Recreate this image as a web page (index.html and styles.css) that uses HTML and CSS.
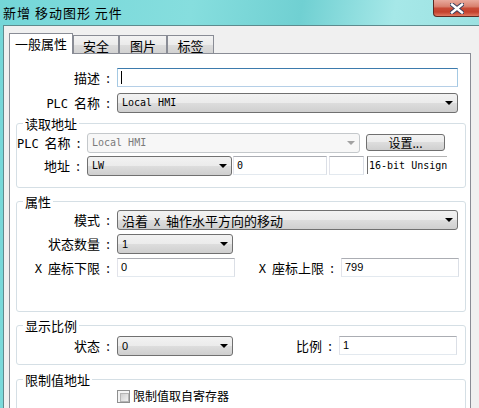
FILE: index.html
```html
<!DOCTYPE html>
<html lang="zh-CN">

<head>
  <meta charset="UTF-8">
  <title>新增 移动图形 元件</title>
  <link rel="stylesheet" href="styles.css">
</head>

<body>
  <div class="titlebar">
    <span class="title">新增 移动图形 元件</span>
    <button class="close" type="button" aria-label="关闭">
      <svg width="14" height="11" viewBox="0 0 14 11">
        <path d="M2 1.5 L12 9.5 M12 1.5 L2 9.5" stroke="#3c3f5c" stroke-width="4.4" stroke-linecap="square" />
        <path d="M2 1.5 L12 9.5 M12 1.5 L2 9.5" stroke="#fff" stroke-width="2.4" stroke-linecap="square" />
      </svg>
    </button>
  </div>

  <div class="client">
    <div class="tabs">
      <span class="tab active">一般属性</span>
      <span class="tab w46">安全</span>
      <span class="tab w48">图片</span>
      <span class="tab w47">标签</span>
    </div>

    <div class="panel">
      <div class="row">
        <label class="lbl">描述</label>
        <div class="edit focus w341"><span class="caret"></span></div>
      </div>
      <div class="row">
        <label class="lbl"><span class="mono">PLC</span> 名称</label>
        <div class="combo w341"><span class="mono">Local HMI</span></div>
      </div>

      <fieldset class="group read">
        <legend>读取地址</legend>
        <div class="row">
          <label class="lbl"><span class="mono">PLC</span> 名称</label>
          <div class="combo disabled w273"><span class="mono">Local HMI</span></div>
          <button class="btn" type="button">设置...</button>
        </div>
        <div class="row">
          <label class="lbl">地址</label>
          <div class="combo w145"><span class="mono">LW</span></div>
          <div class="edit w94 gap1"><span class="mono">0</span></div>
          <div class="edit w35 gap2"></div>
          <div class="static mono">16-bit Unsign</div>
        </div>
      </fieldset>

      <fieldset class="group props">
        <legend>属性</legend>
        <div class="row">
          <label class="lbl">模式</label>
          <div class="combo w341"><span>沿着<span class="mono axis">X</span>轴作水平方向的移动</span></div>
        </div>
        <div class="row">
          <label class="lbl">状态数量</label>
          <div class="combo w116"><span class="num">1</span></div>
        </div>
        <div class="row">
          <label class="lbl"><span class="mono">X</span> 座标下限</label>
          <div class="edit w118"><span class="num">0</span></div>
          <label class="lbl second"><span class="mono">X</span> 座标上限</label>
          <div class="edit w118"><span class="num">799</span></div>
        </div>
      </fieldset>

      <fieldset class="group scale">
        <legend>显示比例</legend>
        <div class="row">
          <label class="lbl">状态</label>
          <div class="combo w116"><span class="num">0</span></div>
          <label class="lbl second">比例</label>
          <div class="edit w118"><span class="num">1</span></div>
        </div>
      </fieldset>

      <fieldset class="group limit">
        <legend>限制值地址</legend>
        <div class="row">
          <label class="checkline"><span class="check"></span>限制值取自寄存器</label>
        </div>
      </fieldset>
    </div>
  </div>
</body>

</html>
```

FILE: styles.css
```css
* {
  box-sizing: border-box;
  margin: 0;
  padding: 0;
}

html,
body {
  width: 479px;
  height: 408px;
  overflow: hidden;
}

body {
  font: 13px/15px "Noto Sans CJK SC", sans-serif;
  color: #000;
  /* aero glass frame */
  background: linear-gradient(100deg, #74d6d8 0%, #86dede 35%, #70d0d2 55%, #a6e8e8 72%, #94dcdc 100%);
}

/* ---------- title bar ---------- */
.titlebar {
  height: 25px;
  display: flex;
  justify-content: space-between;
  align-items: flex-start;
}

.title {
  padding: 5px 0 0 3px;
  letter-spacing: 1px;
}

.close {
  width: 48px;
  height: 17px;
  margin-right: -2px;
  border: 1px solid #5b2a22;
  border-top: 0;
  border-radius: 0 0 4px 4px;
  background: linear-gradient(#e9aa9d, #d98270 40%, #c84b36 52%, #c4412c 75%, #e07a62);
  display: flex;
  align-items: center;
  justify-content: center;
  padding-top: 1px;
}

/* ---------- client area ---------- */
.client {
  margin-left: 3px;
  height: 383px;
  border-top: 1px solid #5e8b8e;
  border-left: 1px solid #5e8b8e;
  background: #f0f0f0;
  padding: 7px 0 0 5px;
}

.tabs {
  display: flex;
  align-items: flex-end;
  height: 20px;
}

.tab {
  height: 18px;
  border: 1px solid #898c95;
  border-bottom: 0;
  background: linear-gradient(#f3f3f3, #ebebeb 50%, #dddddd 50%, #d2d2d2);
  line-height: 17px;
  padding-top: 1px;
  text-align: center;
}

.tab.active {
  width: 64px;
  height: 21px;
  margin-bottom: -1px;
  position: relative;
  background: #fff;
  line-height: 18px;
}

.w46 { width: 46px; }
.w47 { width: 47px; }
.w48 { width: 48px; }

.panel {
  width: 462px;
  height: 360px;
  border: 1px solid #898c95;
  background: #fff;
  padding-top: 14px;
}

/* ---------- rows and labels ---------- */
.row {
  display: flex;
  align-items: flex-start;
  height: 20px;
}

.row + .row {
  margin-top: 5px;
}

.lbl {
  width: 101px;
  margin-right: 6px;
  text-align: right;
  line-height: 19px;
  white-space: nowrap;
}

/* the spaced-out colon after every field name */
.lbl::after {
  content: ":";
  display: inline-block;
  width: 6px;
  margin-left: 5px;
  text-align: center;
}

.group .lbl {
  width: 94px;
}

.group .lbl.second {
  width: 100px;
}

.read .lbl {
  width: 64px;
}

.mono {
  font: 10px/1 "DejaVu Sans Mono", monospace;
}

.lbl .mono {
  font-size: 12px;
  margin-right: 3px;
}

.axis {
  margin: 0 6px;
}

.num {
  font: 11px/1 "Liberation Sans", sans-serif;
}

/* ---------- group boxes ---------- */
.group {
  margin: 3px 4px 0 6px;
  border: 1px solid #d5dfe5;
  border-radius: 3px;
  min-width: 0;
}

.group legend {
  margin-left: 6px;
  padding: 0 2px;
  line-height: 15px;
}

.read {
  padding: 2px 0 11px;
}

.read .row + .row {
  margin-top: 3px;
}

.props {
  margin-top: 6px;
  padding: 1px 0 33px;
}

.props .row + .row {
  margin-top: 4px;
}

.scale {
  margin-top: 6px;
  padding: 3px 0 8px;
}

.limit {
  margin-top: 7px;
  padding: 2px 0 6px;
}

/* ---------- controls ---------- */
.edit {
  height: 19px;
  border: 1px solid;
  border-color: #abadb3 #dbdfe6 #e3e9ef #e2e3ea;
  background: #fff;
  display: flex;
  align-items: center;
  padding-left: 3px;
}

.edit.focus {
  border-color: #3d7bad #a4c9e3 #b5cfe7 #a4c9e3;
}

.caret {
  width: 1px;
  height: 13px;
  background: #000;
}

.combo {
  height: 20px;
  border: 1px solid #707070;
  border-radius: 3px;
  background: linear-gradient(#f2f2f2, #ebebeb 50%, #dddddd 50%, #cfcfcf);
  display: flex;
  align-items: center;
  justify-content: space-between;
  padding: 0 4px 0 4px;
  white-space: nowrap;
}

.combo::after {
  content: "";
  border: 4px solid transparent;
  border-top: 4px solid #000;
  border-bottom: 0;
}

.combo.disabled {
  border-color: #c4c8cb;
  background: #f7f7f7;
  color: #7a7a7a;
}

.combo.disabled::after {
  border-top-color: #a2a2a2;
}

.btn {
  width: 79px;
  height: 17px;
  margin: 1px 0 0 6px;
  border: 1px solid #707070;
  border-radius: 3px;
  background: linear-gradient(#f2f2f2, #ebebeb 50%, #dddddd 50%, #cfcfcf);
  font: 12px/15px "Noto Sans CJK SC", sans-serif;
}

.static {
  width: 80px;
  height: 18px;
  margin-left: 3px;
  border-left: 1px solid #6f6f6f;
  border-top: 1px solid #b4b4b4;
  padding: 4px 0 0 1px;
  white-space: nowrap;
}

.w341 { width: 341px; }
.w273 { width: 273px; }
.w145 { width: 145px; }
.w118 { width: 118px; }
.w116 { width: 116px; }
.w94 { width: 94px; }
.w35 { width: 35px; }
.gap1 { margin-left: 1px; }
.gap2 { margin-left: 2px; }

/* ---------- checkbox ---------- */
.checkline {
  display: flex;
  align-items: center;
  margin-left: 100px;
  font-size: 12px;
  line-height: 14px;
}

.check {
  width: 13px;
  height: 13px;
  margin-right: 3px;
  border: 1px solid #8e8f8f;
  background: #f4f4f4;
  padding: 2px;
}

.check::before {
  content: "";
  display: block;
  width: 100%;
  height: 100%;
  border: 1px solid #b5b5b5;
  background: linear-gradient(135deg, #cfcfcf, #f1f1f1);
}
```
